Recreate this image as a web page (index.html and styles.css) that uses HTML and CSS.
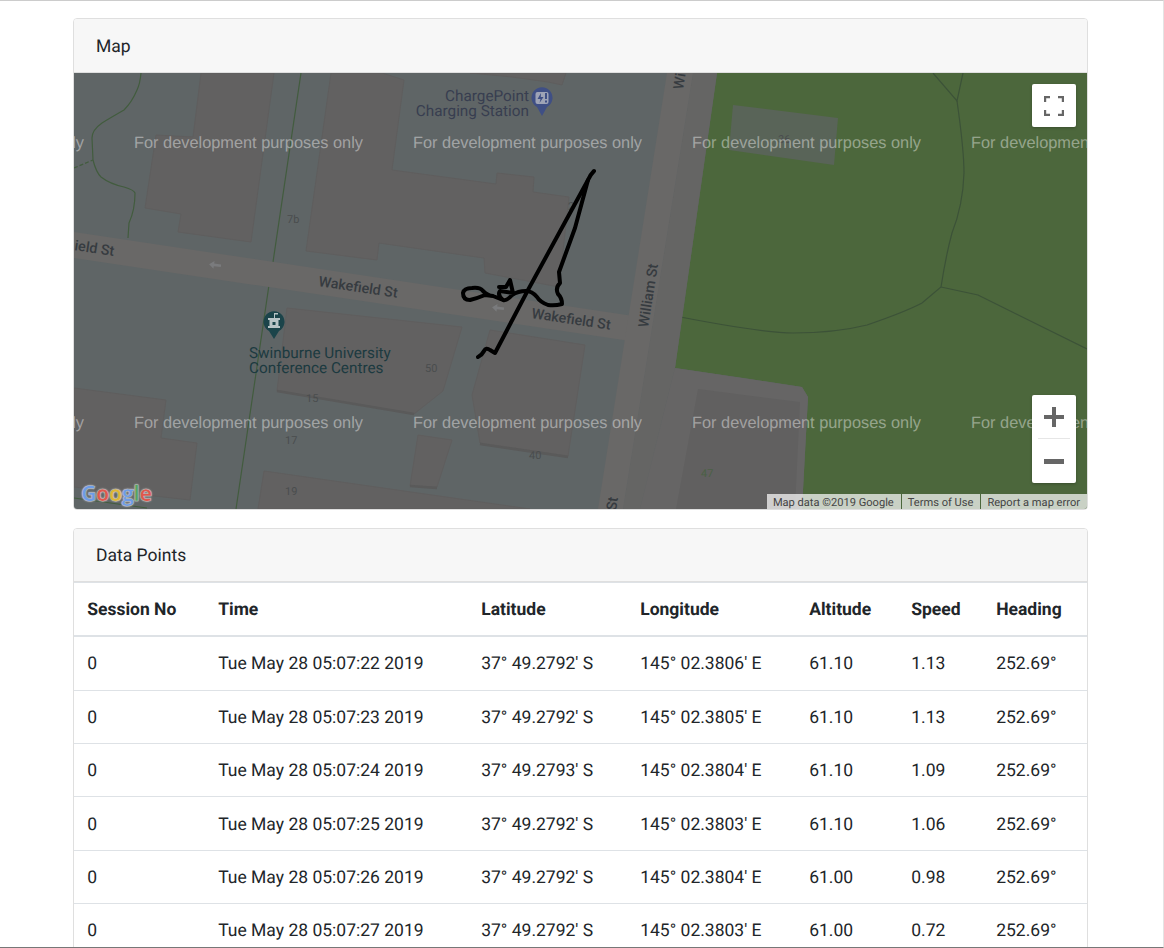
FILE: index.html
```html
<!DOCTYPE html>
<html lang="en">

<head>
    <meta charset="UTF-8">
    <meta name="viewport" content="width=device-width, initial-scale=1.0">
    <title>Session Data</title>
    <link rel="stylesheet" href="styles.css">
</head>

<body>
    <div class="container">
        <div class="card">
            <div class="card-header card-header-map">Map</div>
            <div class="map">
                <svg class="map-canvas" viewBox="74 73 1013 436" width="1013" height="436">
                    <!-- park -->
                    <polygon class="park" points="717,73 675,368 750,379 802,387 808,397 802,509 1087,509 1087,73" />
                    <polygon class="plaza" points="733,105 838,118 834,165 729,150" />
                    <polyline class="park-path" points="933,73 957,101 963,73" />
                    <path class="park-path" d="M957 101 Q964 150 964 173 Q963 205 952 233 Q946 255 941 287 L922 303 Q905 312 867 325 Q835 333 793 333 Q760 333 660 313" />
                    <path class="park-path" d="M941 287 L978 295 L1087 349" />

                    <!-- paths under the roads -->
                    <path class="walk" d="M141 73 Q140 84 137 90 Q132 102 124 110 Q110 118 102 123 Q92 130 92 138 L93 160 Q96 172 101 177 Q110 184 124 187 Q134 190 135 193 Q135 210 129 223 L128 238" />
                    <line class="walk walk-dash" x1="74" y1="168" x2="93" y2="160" />
                    <line class="walk" x1="301" y1="73" x2="273" y2="262" />
                    <line class="walk" x1="269" y1="285" x2="236" y2="509" />
                    <line class="walk" x1="74" y1="498" x2="147" y2="508" />

                    <!-- roads -->
                    <polygon class="verge" points="693,73 717,73 675,368 640,509 623,509" />
                    <polygon class="block" points="675,368 802,387 808,397 802,509 640,509" />
                    <polygon class="road" points="74,232 640,317 630,341 74,258" />
                    <polygon class="road" points="667,73 693,73 623,509 598,509" />

                    <!-- buildings -->
                    <polygon class="building" points="201,73 274,73 251,242 178,232 181,214 145,208 156,135 193,137" />
                    <polygon class="building" points="331,73 382,73 404,80 392,170 496,184 497,173 534,177 533,192 569,197 559,287 485,273 484,258 379,243 377,260 306,251" />
                    <polygon class="building" points="470,73 566,73 562,85 548,82 512,77" />
                    <polygon class="building" points="74,388 166,400 161,438 197,443 190,500 74,487" />
                    <polygon class="building" points="287,308 462,327 443,391 414,414 277,391" />
                    <polygon class="building" points="490,330 585,345 568,456 480,443 472,395" />
                    <polygon class="building" points="418,435 452,440 437,487 410,486" />
                    <polygon class="building" points="264,471 530,509 258,509" />
                    <polygon class="building-dark" points="698,389 800,402 795,509 676,509" />
                    <line class="base" x1="277" y1="391" x2="414" y2="414" />
                    <line class="base" x1="480" y1="444" x2="568" y2="457" />
                    <line class="base" x1="410" y1="486" x2="437" y2="488" />

                    <!-- street and place labels -->
                    <text class="street" transform="translate(74,250) rotate(8.5)">ield St</text>
                    <text class="street" transform="translate(318,286) rotate(8.5)">Wakefield St</text>
                    <text class="street" transform="translate(531,318) rotate(8.5)">Wakefield St</text>
                    <text class="street" transform="translate(648,328) rotate(-81)">William St</text>
                    <text class="street" transform="translate(683,90) rotate(-81)">Wi</text>
                    <text class="street" transform="translate(616,511) rotate(-81)">St</text>
                    <path class="arrow" transform="translate(215,265) rotate(8)" d="M-6 0 L-1 -4 V-1.300 H6 V1.300 H-1 V4 Z" />
                    <path class="arrow" transform="translate(498,308) rotate(8)" d="M-6 0 L-1 -4 V-1.300 H6 V1.300 H-1 V4 Z" />

                    <text class="num" x="287" y="223">7b</text>
                    <text class="num" x="425" y="372">50</text>
                    <text class="num" x="306" y="402">15</text>
                    <text class="num" x="285" y="444">17</text>
                    <text class="num" x="285" y="495">19</text>
                    <text class="num" x="529" y="459">40</text>
                    <text class="num num-green" x="701" y="477">47</text>
                    <text class="num" x="778" y="143">36</text>
                    <text class="num" x="568" y="210">2</text>

                    <text class="poi poi-blue" x="529" y="101" text-anchor="end">ChargePoint</text>
                    <text class="poi poi-blue" x="529" y="116" text-anchor="end">Charging Station</text>
                    <path class="pin-blue" d="M542 116 L537 107 A10.5 10.5 0 1 1 547 107 Z" />
                    <rect class="pin-blue-box" x="535.500" y="92" width="13" height="12" rx="2" />
                    <path class="pin-blue" d="M541 93 L537.500 99 L540.500 99 L539.500 103 L543.500 97 L540.800 97 Z M545 93 H547 V99 H545 Z M545 100.500 H547 V102.500 H545 Z" />

                    <text class="poi poi-teal" x="249" y="358">Swinburne University</text>
                    <text class="poi poi-teal" x="249" y="373">Conference Centres</text>
                    <path class="pin-teal" d="M274 339 L269 331 A10.500 10.500 0 1 1 279 331 Z" />
                    <path class="pin-teal-mark" d="M268 328 H280 V326 H278.500 V320 H280 V318 H275 V314.500 H278 V313 H274 V318 H268 V320 H269.500 V326 H268 Z" />
                    <rect class="pin-teal" x="272.500" y="322" width="3" height="3" />

                    <!-- watermark -->
                    <text class="watermark" x="-145" y="148">For development purposes only</text>
                    <text class="watermark" x="134" y="148">For development purposes only</text>
                    <text class="watermark" x="413" y="148">For development purposes only</text>
                    <text class="watermark" x="692" y="148">For development purposes only</text>
                    <text class="watermark" x="971" y="148">For development purposes only</text>
                    <text class="watermark" x="-145" y="428">For development purposes only</text>
                    <text class="watermark" x="134" y="428">For development purposes only</text>
                    <text class="watermark" x="413" y="428">For development purposes only</text>
                    <text class="watermark" x="692" y="428">For development purposes only</text>
                    <text class="watermark" x="971" y="428">For development purposes only</text>

                    <!-- track -->
                    <path class="track" d="M594 171 Q590 175 588 180 L528 290 L495 353 L490 350 Q486 347 484 351 Q482 355 478 357" />
                    <path class="track" d="M588 180 L575 228 L559 272 L560 283 Q555 288 558 294 Q562 298 562 304 Q555 306 548 305 Q540 302 537 297 Q532 291 526 291 Q518 291 512 295 Q507 301 503 300 Q497 295 500 291 L513 293 L510 280 L506 287 L499 287 M503 300 L493 296 Q488 296 483 291 Q480 287 472 288 Q464 288 463 293 Q463 300 470 300 Q478 298 485 295 L493 296" />
                </svg>

                <div class="map-btn btn-fullscreen">
                    <svg viewBox="0 0 20 20" width="20" height="20">
                        <path d="M1 6 V1 H6 M14 1 H19 V6 M19 14 V19 H14 M6 19 H1 V14" />
                    </svg>
                </div>
                <div class="map-btn btn-zoom">
                    <div class="zoom-part">
                        <svg viewBox="0 0 20 20" width="20" height="20">
                            <path d="M8 0 H12 V8 H20 V12 H12 V20 H8 V12 H0 V8 H8 Z" />
                        </svg>
                    </div>
                    <div class="zoom-divider"></div>
                    <div class="zoom-part">
                        <svg viewBox="0 0 20 20" width="20" height="20">
                            <path d="M0 8 H20 V13 H0 Z" />
                        </svg>
                    </div>
                </div>

                <div class="google-logo"><span class="g-blue">G</span><span class="g-red">o</span><span class="g-yellow">o</span><span class="g-blue">g</span><span class="g-green">l</span><span class="g-red">e</span></div>

                <div class="attribution">
                    <span>Map data ©2019 Google</span>
                    <span>Terms of Use</span>
                    <span>Report a map error</span>
                </div>
            </div>
        </div>

        <div class="card">
            <div class="card-header card-header-data">Data Points</div>
            <table class="data-table">
                <colgroup>
                    <col class="col-session">
                    <col class="col-time">
                    <col class="col-lat">
                    <col class="col-lon">
                    <col class="col-alt">
                    <col class="col-speed">
                    <col class="col-heading">
                </colgroup>
                <thead>
                    <tr>
                        <th>Session No</th>
                        <th>Time</th>
                        <th>Latitude</th>
                        <th>Longitude</th>
                        <th>Altitude</th>
                        <th>Speed</th>
                        <th>Heading</th>
                    </tr>
                </thead>
                <tbody>
                    <tr>
                        <td>0</td>
                        <td>Tue May 28 05:07:22 2019</td>
                        <td>37° 49.2792' S</td>
                        <td>145° 02.3806' E</td>
                        <td>61.10</td>
                        <td>1.13</td>
                        <td>252.69°</td>
                    </tr>
                    <tr>
                        <td>0</td>
                        <td>Tue May 28 05:07:23 2019</td>
                        <td>37° 49.2792' S</td>
                        <td>145° 02.3805' E</td>
                        <td>61.10</td>
                        <td>1.13</td>
                        <td>252.69°</td>
                    </tr>
                    <tr>
                        <td>0</td>
                        <td>Tue May 28 05:07:24 2019</td>
                        <td>37° 49.2793' S</td>
                        <td>145° 02.3804' E</td>
                        <td>61.10</td>
                        <td>1.09</td>
                        <td>252.69°</td>
                    </tr>
                    <tr>
                        <td>0</td>
                        <td>Tue May 28 05:07:25 2019</td>
                        <td>37° 49.2792' S</td>
                        <td>145° 02.3803' E</td>
                        <td>61.10</td>
                        <td>1.06</td>
                        <td>252.69°</td>
                    </tr>
                    <tr>
                        <td>0</td>
                        <td>Tue May 28 05:07:26 2019</td>
                        <td>37° 49.2792' S</td>
                        <td>145° 02.3804' E</td>
                        <td>61.00</td>
                        <td>0.98</td>
                        <td>252.69°</td>
                    </tr>
                    <tr>
                        <td>0</td>
                        <td>Tue May 28 05:07:27 2019</td>
                        <td>37° 49.2792' S</td>
                        <td>145° 02.3803' E</td>
                        <td>61.00</td>
                        <td>0.72</td>
                        <td>252.69°</td>
                    </tr>
                </tbody>
            </table>
        </div>
    </div>
</body>

</html>
```

FILE: styles.css
```css
html,
body {
    margin: 0;
    height: 948px;
    overflow: hidden;
}

body {
    box-sizing: border-box;
    font-family: Roboto, sans-serif;
    font-size: 17.5px;
    line-height: 26.4px;
    color: #212529;
    background-color: #fff;
    border-top: 1px solid #ccc;
    border-bottom: 1px solid #777;
    border-right: 1px solid #e4e4e4;
    text-rendering: geometricPrecision;
}

.container {
    width: 1015px;
    margin-left: 73px;
    padding-top: 17px;
}

.card {
    border: 1px solid #dfdfdf;
    border-radius: 4px;
    overflow: hidden;
    margin-bottom: 18px;
}

.card-header {
    padding: 14px 22px 12px;
    background-color: #f7f7f7;
    border-bottom: 1px solid #dfdfdf;
}

.card-header-map {
    padding-top: 15px;
}

.card-header-data {
    padding-bottom: 11px;
}

/* map */
.map {
    position: relative;
    height: 436px;
    background-color: #5f6566;
    overflow: hidden;
}

.map-canvas {
    display: block;
}

.park {
    fill: #4c673c;
}

.plaza {
    fill: #596458;
}

.park-path {
    fill: none;
    stroke: #3c5238;
    stroke-width: 1.2;
}

.walk {
    fill: none;
    stroke: #425c3e;
    stroke-width: 1.2;
}

.walk-dash {
    stroke-dasharray: 4 2;
}

.road {
    fill: #696867;
}

.verge {
    fill: #656564;
}

.block {
    fill: #666565;
}

.building {
    fill: #626161;
    stroke: #5f5e5e;
    stroke-width: 1;
}

.building-dark {
    fill: #616060;
}

.base {
    stroke: #5a5a5a;
    stroke-width: 2.5;
}

.street {
    font-family: Roboto, sans-serif;
    font-size: 14.3px;
    font-weight: 500;
    fill: #363b40;
}

.arrow {
    fill: #7a7b7d;
}

.num {
    font-family: Roboto, sans-serif;
    font-size: 11px;
    fill: #4a4d4e;
}

.num-green {
    fill: #4b6145;
}

.poi {
    font-family: Roboto, sans-serif;
    font-size: 15.3px;
}

.poi-blue {
    fill: #383e50;
}

.poi-teal {
    fill: #1c3a40;
}

.pin-blue {
    fill: #3f4f85;
}

.pin-blue-box {
    fill: #9ea3b6;
}

.pin-teal {
    fill: #1b444a;
}

.pin-teal-mark {
    fill: #b8c4c6;
}

.watermark {
    font-family: "Liberation Sans", Arial, sans-serif;
    font-size: 16.35px;
    fill: #fff;
    fill-opacity: 0.42;
}

.track {
    fill: none;
    stroke: #000;
    stroke-width: 4;
    stroke-linejoin: round;
    stroke-linecap: round;
}

.map-btn {
    position: absolute;
    left: 958px;
    width: 44px;
    background-color: #fff;
    border-radius: 2px;
    box-shadow: 0 1px 3px rgba(0, 0, 0, 0.25);
}

.map-btn svg {
    display: block;
    fill: #666;
}

.btn-fullscreen {
    top: 11px;
    height: 43px;
    display: flex;
    align-items: center;
    justify-content: center;
}

.btn-fullscreen path {
    fill: none;
    stroke: #666;
    stroke-width: 2.4;
}

.btn-zoom {
    top: 322px;
    height: 88px;
}

.zoom-part {
    height: 43px;
    display: flex;
    align-items: center;
    justify-content: center;
}

.zoom-divider {
    height: 1px;
    margin: 0 6px;
    background-color: #e6e6e6;
}

.google-logo {
    position: absolute;
    left: 7px;
    bottom: 1px;
    font-family: "Open Sans", sans-serif;
    font-size: 21.5px;
    font-weight: 700;
    line-height: 28px;
    letter-spacing: -0.5px;
    -webkit-text-stroke: 0.5px #bbb;
    text-shadow: 0 0 2px #ddd;
}

.g-blue {
    color: #6d9ce8;
}

.g-red {
    color: #e0574c;
}

.g-yellow {
    color: #e0b733;
}

.g-green {
    color: #57a45f;
}

.attribution {
    position: absolute;
    right: 0;
    bottom: 0;
    display: flex;
    gap: 1px;
    font-size: 11.1px;
    line-height: 12px;
    color: #444;
}

.attribution span {
    padding: 3px 7px 0 6px;
    background-color: rgba(255, 255, 255, 0.7);
}

/* table */
.data-table {
    width: 1013px;
    table-layout: fixed;
    border-collapse: collapse;
}

.col-session {
    width: 131px;
}

.col-time {
    width: 263px;
}

.col-lat {
    width: 159px;
}

.col-lon {
    width: 169px;
}

.col-alt {
    width: 102px;
}

.col-speed {
    width: 85px;
}

.data-table th,
.data-table td {
    padding: 14.2px 13.2px 12.2px;
    line-height: 26px;
    text-align: left;
    border-top: 1px solid #dee2e6;
    white-space: nowrap;
}

.data-table th {
    font-weight: 700;
    border-bottom: 2px solid #dee2e6;
}
```
